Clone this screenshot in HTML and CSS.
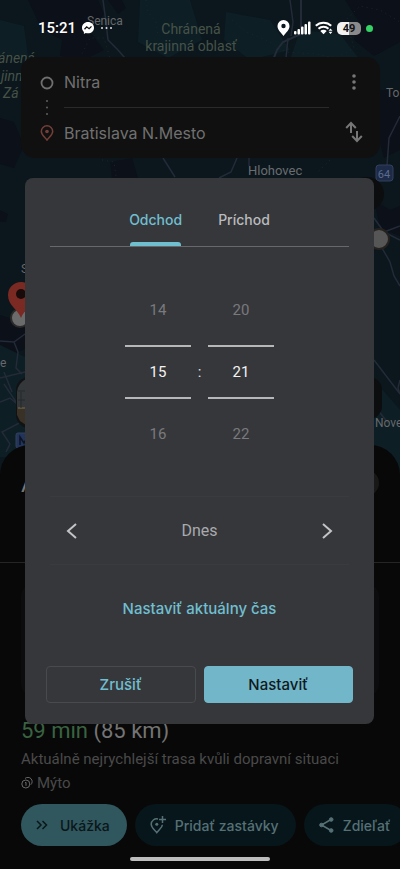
FILE: index.html
```html
<!DOCTYPE html>
<html lang="sk">
<head>
    <meta charset="UTF-8">
    <meta name="viewport" content="width=device-width, initial-scale=1.0">
    <title>Nitra – Bratislava N.Mesto</title>
    <link rel="stylesheet" href="styles.css">
</head>
<body>
<div class="screen">
    <!-- map -->
    <svg class="map" viewBox="0 0 400 500" preserveAspectRatio="xMidYMin slice" aria-hidden="true">
        <rect width="400" height="500" fill="#0b171d"/>
        <g fill="#0c1018">
            <path d="M28 0h70l6 14-14 20-28 6-20-10z"/>
            <path d="M108 0h14l4 8-8 6z"/>
            <path d="M62 40l30-6 12 16-20 10-24-4z"/>
            <path d="M345 0h55v42l-26 14-20-16 4-20z"/>
            <path d="M378 90h22v60l-16 8-8-30z"/>
            <path d="M0 118l14 4 10 24-10 22-14-4z"/>
            <path d="M110 162l22-4 6 20h-26z"/>
            <path d="M0 210l8 4-2 8H0z"/>
            <path d="M0 315l25 8v26l-16 8-9-6z"/>
            <path d="M374 200l16 10 10-4v30l-20-8z"/>
        </g>
        <g fill="#0d1e25">
            <path d="M140 0l50 0 12 40-34 18-30-16z"/>
            <path d="M226 12l44 8 20 30-40 10-26-20z"/>
            <path d="M300 30l40 4 20 26h-70z"/>
            <path d="M0 20l24 6 4 30H0z"/>
            <path d="M374 380l26 30v70h-26z"/>
            <path d="M0 345l25 12v100H0z"/>
        </g>
        <g fill="none" stroke="#232a38" stroke-width="1.5">
            <path d="M103 0l3 22 2 18 10 10 7 8"/>
            <path d="M290 0l3 22-2 14"/>
            <path d="M301 0v34l-18 8-6 8-4 10" stroke-width="2"/>
            <path d="M288 38l-2 20"/>
            <path d="M163 158l12 19"/>
            <path d="M237 158l-6 14-12 6M249 158v8"/>
            <path d="M400 116l-11 22-2 28"/>
            <path d="M374 218l10 14 16-6M384 232l16 8M382 248l8 14 4 14 6 10"/>
            <path d="M0 341l14 1 11-8M14 342l4 10-2 16 6 6"/>
            <path d="M0 378l25-6M4 384l12 18 9-6M0 402l10-4 14 12M25 420L2 432l8 12-4 8M4 372l8 20"/>
            <path d="M374 360l26 34M400 380l-2 8 2 6M374 405l14 18"/>
        </g>
        <g fill="none" stroke="#1c252d" stroke-dasharray="1 4">
            <path d="M80 58l10-20 14 0 6 20"/>
            <path d="M146 0l2 12 8 10 2 14"/>
            <path d="M232 20l14 12 20 8 20 12 30 2 20 4 18-10-8-28 14-14 20 4 20 12 16 2"/>
            <path d="M102 160l12 2 2 14M330 160l-12 12"/>
        </g>
        <g class="places">
            <text x="87" y="25">Senica</text>
            <text x="248" y="175" class="town">Hlohovec</text>
            <text x="386" y="97">To</text>
            <text x="375" y="427">Nove</text>
            <text x="21" y="273">S</text>
            <text x="0" y="367">e</text>
        </g>
        <g class="parks">
            <text x="191" y="34" text-anchor="middle">Chránená</text>
            <text x="191" y="51" text-anchor="middle">krajinná oblasť</text>
            <text x="35" y="63" text-anchor="end" class="slanted">ánená</text>
            <text x="1" y="81" class="slanted">jinn</text>
            <text x="3" y="98" class="slanted">Zá</text>
        </g>
        <!-- tops of the label line that runs under the route card -->
        <path d="M148 57.500h8M160 57.500h4M169 57.500h3M178 57.500h3M184 57.500h3" stroke="#2b352e"/>
        <!-- road signs -->
        <rect x="376" y="165" width="17" height="16" rx="3" fill="#1d2a48" stroke="#34415d"/>
        <text x="384" y="178" class="road" text-anchor="middle">64</text>
        <rect x="16" y="433" width="16" height="15" rx="2" fill="#22345a" stroke="#34415d"/>
        <path d="M20 445v-8l4 6 3-5" fill="none" stroke="#0c1322" stroke-width="1.500"/>
        <!-- map buttons, markers -->
        <circle cx="367" cy="194" r="17" fill="#0c0d0e"/>
        <circle cx="379" cy="239" r="10" fill="#565656" stroke="#24211e" stroke-width="2"/>
        <circle cx="20" cy="318" r="9" fill="#6b6b6b" stroke="#2b2a29" stroke-width="2"/>
        <path d="M21 318c-3-9-13-12-13-23a13 13 0 0 1 26 0c0 11-10 14-13 23z" fill="#7a2a22"/>
        <circle cx="21" cy="294" r="5" fill="#180b0a"/>
        <rect x="16" y="377" width="40" height="51" rx="13" fill="#101214"/>
        <path d="M17 392q1-9 9-13v29h-9z" fill="#34383b"/>
        <path d="M17 408h9v17l-6-4-3-6z" fill="#3a3126"/>
        <path d="M18 408h8" stroke="#57503d" stroke-width="2"/>
        <path d="M18 391h8M18 400h8M21 392v16" stroke="#26292b"/>
        <rect x="340" y="377" width="42" height="42" rx="13" fill="#0c0d0e"/>
    </svg>

    <!-- status bar -->
    <header class="status">
        <div class="status-left">
            <span class="clock">15:21</span>
            <svg width="12" height="12" viewBox="0 0 12 12" aria-hidden="true">
                <path fill="#fff" d="M6 0C2.600 0 0 2.500 0 5.700c0 1.700.7 3.200 1.900 4.200v2l1.800-1c.7.300 1.500.4 2.300.4 3.400 0 6-2.400 6-5.600S9.400 0 6 0z"/>
                <path fill="none" stroke="#111" stroke-width="1.300" d="M2.500 7.200l2.200-2.400 2.400 1.900 2.400-2.300"/>
            </svg>
            <svg width="13" height="4" viewBox="0 0 13 4" fill="#ddd" aria-hidden="true"><circle cx="2" cy="2" r="1"/><circle cx="6.500" cy="2" r="1"/><circle cx="11" cy="2" r="1"/></svg>
        </div>
        <div class="status-right">
            <svg width="13" height="16" viewBox="0 0 13 16" aria-hidden="true">
                <path fill="#fff" fill-rule="evenodd" d="M6.500 0A6 6 0 0 0 .5 6c0 4 3.500 6.500 6 10 2.500-3.500 6-6 6-10a6 6 0 0 0-6-6zm0 3.800a2.200 2.200 0 1 1 0 4.400 2.200 2.200 0 0 1 0-4.400z"/>
            </svg>
            <svg width="17" height="14" viewBox="0 0 17 14" fill="#fff" aria-hidden="true">
                <rect x="0" y="10" width="2.500" height="3.500" rx="1"/><rect x="3.500" y="8" width="2.500" height="5.500" rx="1"/><rect x="7" y="5.500" width="2.500" height="8" rx="1"/><rect x="10.500" y="3" width="2.500" height="10.500" rx="1"/><rect x="14" y="0.500" width="2.500" height="13" rx="1"/>
            </svg>
            <svg width="18" height="14" viewBox="0 0 18 14" fill="none" stroke="#fff" stroke-width="2" aria-hidden="true">
                <path d="M.8 4.800a11 11 0 0 1 15.400 0M3.500 7.800a7 7 0 0 1 10 0"/>
                <path fill="#fff" stroke="none" d="M5.300 10a4.500 4.500 0 0 1 6.400 0L8.500 13.300z"/>
                <path d="M15.500 7.500l2 2.300h-4zM15.500 13l-2-2.200h4z" fill="#fff" stroke="none"/>
            </svg>
            <span class="battery">49</span>
            <span class="live-dot"></span>
        </div>
    </header>

    <!-- route -->
    <section class="route">
        <div class="route-icons">
            <svg width="14" height="14" viewBox="0 0 14 14" aria-hidden="true"><circle cx="7" cy="7" r="5.500" fill="none" stroke="#6f6f6f" stroke-width="1.800"/></svg>
            <svg width="4" height="17" viewBox="0 0 4 17" fill="#5f5f5f" aria-hidden="true"><circle cx="2" cy="2" r="1"/><circle cx="2" cy="8.500" r="1"/><circle cx="2" cy="15" r="1"/></svg>
            <svg width="14" height="16" viewBox="0 0 14 16" aria-hidden="true">
                <path d="M7 15c-2-3-5.700-5-5.700-8.500a5.700 5.700 0 0 1 11.400 0C12.700 10 9 12 7 15z" fill="none" stroke="#743f38" stroke-width="1.500"/>
                <circle cx="7" cy="6.500" r="1.800" fill="#743f38"/>
            </svg>
        </div>
        <div class="route-fields">
            <input type="text" value="Nitra" aria-label="Východiskový bod">
            <input type="text" value="Bratislava N.Mesto" aria-label="Cieľ">
        </div>
        <div class="route-actions">
            <button type="button" aria-label="Ďalšie možnosti">
                <svg width="4" height="16" viewBox="0 0 4 16" fill="#777"><circle cx="2" cy="2" r="1.800"/><circle cx="2" cy="8" r="1.800"/><circle cx="2" cy="14" r="1.800"/></svg>
            </button>
            <button type="button" aria-label="Vymeniť smer">
                <svg width="18" height="22" viewBox="0 0 18 22" fill="none" stroke="#777" stroke-width="2"><path d="M6 12V2M1.200 7L6 2l4.800 5M12 10v10M7.200 15l4.800 5 4.800-5"/></svg>
            </button>
        </div>
    </section>

    <!-- bottom sheet -->
    <main class="sheet">
        <div class="sheet-head">
            <h1>A</h1>
            <span class="sheet-close"></span>
        </div>
        <div class="sheet-body">
            <div class="preview"></div>
            <h2><span class="fast">59 min</span> (85 km)</h2>
            <p class="note">Aktuálně nejrychlejší trasa kvůli dopravní situaci</p>
            <p class="toll">
                <svg width="12" height="12" viewBox="0 0 12 12" fill="none" stroke="#6a6a6a" aria-hidden="true"><circle cx="4.800" cy="7" r="4"/><path d="M4 1.500a4 4 0 1 1 5.800 6.200M4 5.800l1-.5v3.500"/></svg>
                Mýto
            </p>
        </div>
        <div class="chips">
            <button type="button" class="chip chip-main">
                <svg width="12" height="10" viewBox="0 0 12 10" fill="none" stroke="#0a1719" stroke-width="1.500" aria-hidden="true"><path d="M1 1l4 4-4 4M6.500 1l4 4-4 4"/></svg>
                Ukážka
            </button>
            <button type="button" class="chip">
                <svg width="16" height="18" viewBox="0 0 16 18" fill="none" stroke="#567176" stroke-width="1.500" aria-hidden="true"><path d="M8 3A5.500 5.500 0 0 0 1.200 8.200c0 3.500 3.600 5.500 5.600 8.500 2-3 5.400-5 5.600-8M12.500 0v7M9 3.500h7"/><circle cx="6.800" cy="8.300" r="1.500" fill="#567176" stroke="none"/></svg>
                Pridať zastávky
            </button>
            <button type="button" class="chip">
                <svg width="15" height="16" viewBox="0 0 15 16" fill="#567176" stroke="#567176" aria-hidden="true"><path d="M12 2.500L2.500 8l9.500 5.500" fill="none" stroke-width="1.500"/><circle cx="12.200" cy="2.500" r="1.800"/><circle cx="2.500" cy="8" r="1.800"/><circle cx="12.200" cy="13.500" r="1.800"/></svg>
                Zdieľať
            </button>
        </div>
        <div class="home-bar"></div>
    </main>

    <!-- departure time dialog -->
    <div class="overlay">
        <form class="dialog" role="dialog" aria-label="Čas odchodu">
            <div class="tabs" role="tablist">
                <button type="button" role="tab" class="tab active" aria-selected="true">Odchod</button>
                <button type="button" role="tab" class="tab" aria-selected="false">Príchod</button>
            </div>
            <div class="picker">
                <div class="wheel">
                    <button type="button">14</button>
                    <input type="text" value="15" inputmode="numeric" aria-label="Hodina">
                    <button type="button">16</button>
                </div>
                <span class="colon">:</span>
                <div class="wheel">
                    <button type="button">20</button>
                    <input type="text" value="21" inputmode="numeric" aria-label="Minúta">
                    <button type="button">22</button>
                </div>
            </div>
            <div class="day">
                <button type="button" aria-label="Predchádzajúci deň">
                    <svg width="12" height="16" viewBox="0 0 12 16"><path d="M10 1L2 8l8 7"/></svg>
                </button>
                <span>Dnes</span>
                <button type="button" aria-label="Nasledujúci deň">
                    <svg width="12" height="16" viewBox="0 0 12 16"><path d="M2 1l8 7-8 7"/></svg>
                </button>
            </div>
            <button type="button" class="now">Nastaviť aktuálny čas</button>
            <div class="actions">
                <button type="button" class="cancel">Zrušiť</button>
                <button type="button" class="confirm">Nastaviť</button>
            </div>
        </form>
    </div>
</div>
</body>
</html>
```

FILE: styles.css
```css
* {
    box-sizing: border-box;
}
body {
    margin: 0;
    background-color: #080808;
    font-family: Roboto, "Noto Sans", sans-serif;
    font-size: 16px;
}
button, input {
    font-family: inherit;
    font-size: inherit;
    padding: 0;
    border: none;
    border-radius: 0;
    background: none;
    color: inherit;
}
button {
    cursor: pointer;
}
svg {
    display: block;
    flex: none;
}
h1, h2, p {
    margin: 0;
    font-weight: 400;
}
.screen {
    position: relative;
    display: flex;
    flex-direction: column;
    min-height: 100vh;
    overflow: hidden;
}

/* map */
.map {
    position: absolute;
    top: 0;
    left: 0;
    width: 100%;
}
.places text {
    font-size: 12px;
    fill: #66686b;
}
.places .town {
    font-size: 13px;
    fill: #6a6c6f;
}
.parks text {
    font-size: 14px;
    fill: #465247;
}
.parks .slanted {
    font-style: italic;
}
.road {
    font-size: 11px;
    fill: #5c6c8c;
}

/* status bar */
.status {
    position: relative;
    display: flex;
    justify-content: space-between;
    height: 57px;
    padding: 0 27px 0 38px;
    color: #fff;
}
.status-left, .status-right {
    display: flex;
    align-items: center;
    height: 56px;
}
.status-left {
    gap: 6px;
}
.status-right {
    gap: 4px;
}
.clock {
    font-size: 15px;
    font-weight: 500;
}
.battery {
    width: 24px;
    border-radius: 5px;
    background: linear-gradient(90deg, #f2f2f2 50%, #8a8a8a 50%);
    color: #111;
    font-size: 11px;
    font-weight: 700;
    line-height: 13px;
    text-align: center;
}
.live-dot {
    width: 7px;
    height: 7px;
    margin-left: 1px;
    border-radius: 50%;
    background-color: #35d365;
}

/* route */
.route {
    position: relative;
    display: flex;
    margin: 0 20px 0 21px;
    padding: 0 16px 0 18px;
    border-radius: 14px;
    background-color: #101010;
    color: #707070;
    font-family: Inter, Roboto, sans-serif;
}
.route-icons {
    display: flex;
    flex-direction: column;
    align-items: center;
    justify-content: space-between;
    width: 16px;
    padding: 19px 0 17px;
}
.route-fields {
    flex: 1;
    min-width: 0;
    margin: 0 15px 0 9px;
}
.route-fields input {
    display: block;
    width: 100%;
    height: 50px;
}
.route-fields input:first-child {
    height: 51px;
    border-bottom: 1px solid #2a2a2a;
}
.route-actions {
    display: flex;
    flex-direction: column;
}
.route-actions button {
    display: flex;
    align-items: center;
    justify-content: center;
    width: 20px;
    height: 50px;
}

/* bottom sheet */
.sheet {
    position: relative;
    margin-top: auto;
    border-radius: 30px 30px 0 0;
    background-color: #080808;
    overflow: hidden;
}
.sheet-head {
    display: flex;
    justify-content: space-between;
    height: 118px;
    padding: 25px 21px 0;
    border-bottom: 1px solid #252525;
    color: #777;
}
.sheet-head h1 {
    font-size: 24px;
}
.sheet-close {
    width: 26px;
    height: 26px;
    border-radius: 50%;
    background-color: #181818;
}
.sheet-body {
    padding: 22px 21px 0;
    color: #4a4a4a;
}
.preview {
    height: 110px;
    margin-bottom: 22px;
    border-radius: 10px;
    background-color: #0c0c0e;
}
.sheet-body h2 {
    color: #747474;
    font-size: 22px;
    line-height: 28px;
}
.fast {
    color: #3a6342;
}
.note {
    font-size: 15px;
    line-height: 28px;
}
.toll {
    display: flex;
    align-items: center;
    gap: 4px;
    font-size: 15px;
    line-height: 20px;
}
.chips {
    display: flex;
    gap: 8px;
    margin-top: 11px;
    padding-left: 21px;
}
.chip {
    display: flex;
    flex: none;
    align-items: center;
    gap: 9px;
    height: 42px;
    padding: 0 17px 0 15px;
    border-radius: 21px;
    background-color: #07161a;
    color: #567176;
    font-family: Inter, Roboto, sans-serif;
    font-size: 14px;
    font-weight: 500;
}
.chip-main {
    gap: 12px;
    background-color: #30565e;
    color: #0a1719;
}
.home-bar {
    width: 140px;
    height: 4px;
    margin: 11px auto 8px;
    border-radius: 2px;
    background-color: #bdbdbd;
}

/* dialog */
.overlay {
    position: absolute;
    inset: 0;
    display: flex;
    align-items: center;
    padding: 33px 26px 0 25px;
}
.dialog {
    flex: 1;
    padding: 0 21px 21px;
    border-radius: 8px;
    background-color: #36373b;
    color: #b9bbbe;
}
.tabs {
    display: flex;
    justify-content: center;
    gap: 36px;
    margin: 0 4px;
    padding-top: 16px;
    border-bottom: 1px solid #67686b;
    font-family: Inter, Roboto, sans-serif;
}
.tab {
    display: flex;
    flex-direction: column;
    align-items: center;
    height: 52px;
    line-height: 52px;
    font-size: 14px;
    font-weight: 500;
}
.tab.active {
    color: #70bfd0;
}
.tab.active::after {
    content: "";
    flex: none;
    width: 51px;
    height: 4px;
    margin-top: -4px;
    border-radius: 3px 3px 0 0;
    background-color: #70bfd0;
}
.picker {
    display: flex;
    align-items: center;
    justify-content: center;
    margin-top: 28px;
    color: #797a7d;
    font-size: 15px;
}
.wheel {
    display: flex;
    flex-direction: column;
    width: 66px;
}
.wheel button {
    height: 70px;
}
.wheel input {
    width: 100%;
    height: 54px;
    border: 2px solid #b5b7b9;
    border-width: 2px 0;
    color: #f2f2f2;
    text-align: center;
}
.colon {
    width: 17px;
    color: #e4e4e4;
    text-align: center;
}
.day {
    display: flex;
    align-items: center;
    justify-content: space-between;
    height: 69px;
    margin: 27px 4px 0;
    padding: 0 6px;
    border: 1px solid #3a3b3f;
    border-width: 1px 0;
    color: #a8aaad;
}
.day button {
    display: flex;
    align-items: center;
    justify-content: center;
    width: 32px;
    height: 48px;
}
.day svg {
    fill: none;
    stroke: #c2c4c6;
    stroke-width: 2;
}
.now {
    display: block;
    margin: 24px auto 0;
    color: #70bfd0;
    font-family: Inter, Roboto, sans-serif;
    font-size: 15px;
    font-weight: 500;
    line-height: 40px;
}
.actions {
    display: flex;
    gap: 8px;
    margin-top: 37px;
}
.actions button {
    flex: 1;
    height: 37px;
    border: 1px solid #494a4e;
    border-radius: 4px;
    font-family: Inter, Roboto, sans-serif;
    font-size: 15px;
    font-weight: 500;
}
.actions .cancel {
    color: #70bfd0;
}
.actions .confirm {
    border-color: #72b7c9;
    background-color: #72b7c9;
    color: #101a1d;
}
```
